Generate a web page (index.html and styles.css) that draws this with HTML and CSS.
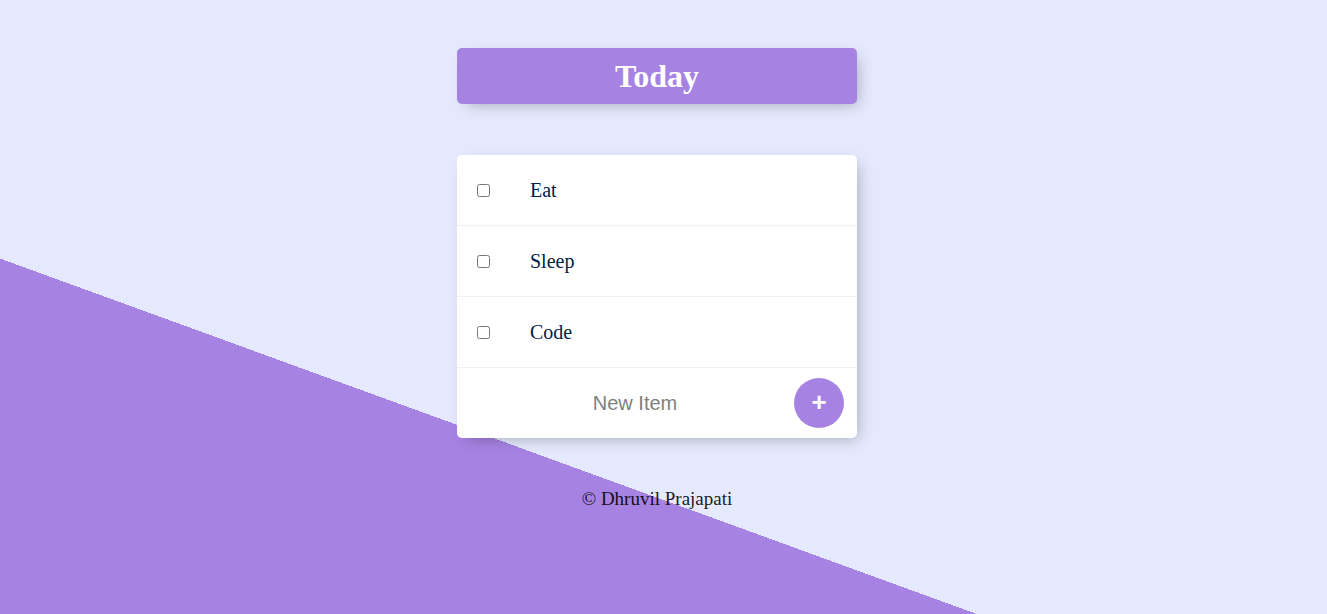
FILE: index.html
```html
<!DOCTYPE html>
<html lang="en">
<head>
<meta charset="utf-8">
<title>To-Do List</title>
<link rel="stylesheet" href="styles.css">
</head>
<body>
  <div class="box heading">
    <h1 class="title">Today</h1>
  </div>
  <div class="box list">
    <div class="item">
      <input type="checkbox" class="check">
      <p class="label">Eat</p>
    </div>
    <div class="item">
      <input type="checkbox" class="check">
      <p class="label">Sleep</p>
    </div>
    <div class="item">
      <input type="checkbox" class="check">
      <p class="label">Code</p>
    </div>
    <form class="item new-form" action="#">
      <input type="text" class="new-input" name="newItem" placeholder="New Item" autocomplete="off">
      <button type="button" class="add-btn">+</button>
    </form>
  </div>
  <footer class="footer">© Dhruvil Prajapati</footer>
</body>
</html>
```
FILE: styles.css
```css
html {
  background: #E4E9FD linear-gradient(20deg, #A683E3 50%, #E4E9FD 50%) 0 0 / 100% 1000px no-repeat;
  min-height: 100%;
}

body {
  margin: 0;
  padding: 48px 13px 0 0;
  font-family: "Liberation Serif", "Times New Roman", serif;
}

.box {
  width: 400px;
  margin: 0 auto;
  background: #fff;
  border-radius: 5px;
  box-shadow: 5px 5px 15px -5px rgba(0, 0, 0, 0.3);
}

.heading {
  background-color: #A683E3;
  text-align: center;
}

.title {
  margin: 0;
  padding: 10px;
  color: #fff;
  font-size: 32px;
  line-height: 36px;
  font-weight: bold;
}

.list {
  margin-top: 51px;
}

.item {
  height: 70px;
  display: flex;
  align-items: center;
  border-bottom: 1px solid #F1F1F1;
}

.item:last-child {
  border-bottom: 0;
}

.check {
  margin: 0 20px;
  width: 13px;
  height: 13px;
}

.label {
  margin: 0;
  padding: 20px;
  font-size: 20px;
  color: #00204a;
}

.new-form {
  margin: 0 0 0 20px;
}

.new-input {
  width: 306px;
  height: 60px;
  box-sizing: border-box;
  padding: 0 0 0 10px;
  border: none;
  text-align: center;
  font-family: "Liberation Sans", Arial, sans-serif;
  font-size: 20px;
  background: transparent;
}

.new-input:focus {
  outline: none;
}

.new-input::placeholder {
  color: grey;
  opacity: 1;
}

.add-btn {
  margin-left: 11px;
  width: 50px;
  height: 50px;
  border-radius: 50%;
  border: 0;
  background-color: #A683E3;
  color: #fff;
  font-family: "Liberation Sans", Arial, sans-serif;
  font-size: 26px;
  font-weight: bold;
  line-height: 1;
  padding: 0 0 2px;
  cursor: pointer;
}

.footer {
  margin-top: 50px;
  text-align: center;
  font-size: 19px;
  color: rgba(0, 0, 0, 0.9);
}
```
